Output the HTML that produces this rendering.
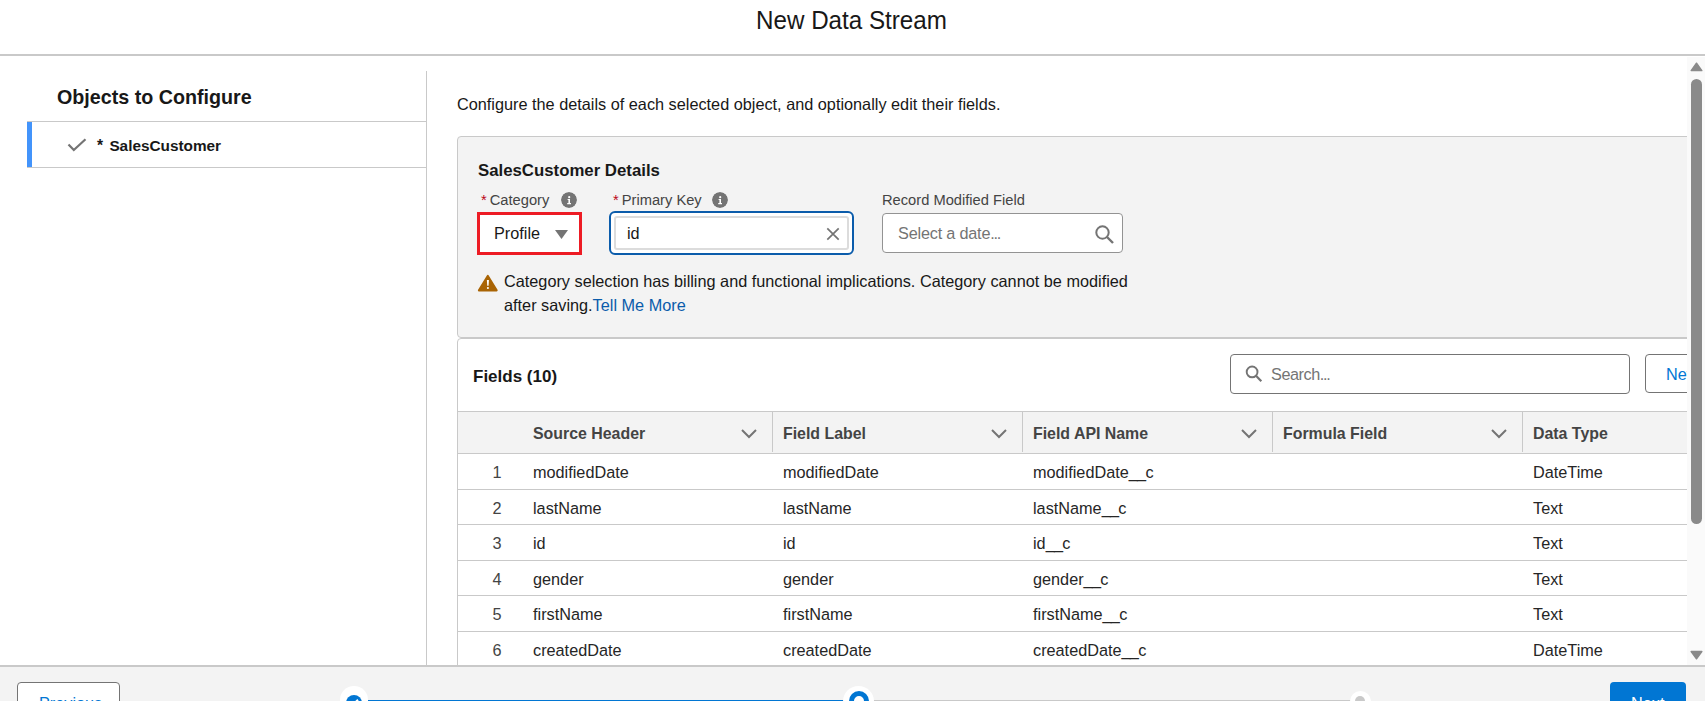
<!DOCTYPE html>
<html>
<head>
<meta charset="utf-8">
<style>
*{box-sizing:border-box;margin:0;padding:0}
html,body{width:1705px;height:701px;overflow:hidden;background:#fff}
body{position:relative;font-family:"Liberation Sans",sans-serif;color:#181818}
.a{position:absolute;white-space:nowrap;line-height:1}
.hdr{position:absolute;left:0;top:0;width:1705px;height:56px;border-bottom:2px solid #c9c9c9;background:#fff}
.title{left:-1px;width:1705px;text-align:center;top:8.5px;font-size:24.2px;color:#181818;transform:scaleY(1.08);transform-origin:50% 85%}
.sep{position:absolute;left:426px;top:71px;width:1px;height:594px;background:#c9c9c9}
.oh{left:57px;top:87.5px;font-size:19.7px;font-weight:bold}
.item{position:absolute;left:27px;top:121px;width:400px;height:47px;border-top:1px solid #c9c9c9;border-bottom:1px solid #c9c9c9}
.item .bar{position:absolute;left:0;top:0;width:5px;height:45px;background:#4394fb}
.sc{left:97px;top:137.6px;font-size:15.6px;font-weight:bold}
.intro{left:457px;top:96.3px;font-size:16.28px}
.details{position:absolute;left:457px;top:136px;width:1300px;height:202px;background:#f3f3f3;border:1px solid #c9c9c9;border-radius:4px}
.dh{left:478px;top:163px;font-size:16.8px;font-weight:bold}
.lbl{top:192.5px;font-size:14.7px;color:#444}
.req{color:#ba0517}
.info{position:absolute;width:16px;height:16px;border-radius:50%;background:#747474}
.box{position:absolute;background:#fff;border:1px solid #939393;border-radius:4px}
.val{font-size:16.25px;top:225.3px}
.warn{left:504px;font-size:16.28px;color:#181818}
.link{color:#0b5cab}
.fields{position:absolute;left:457px;top:338px;width:1300px;height:400px;background:#fff;border:1px solid #c9c9c9;border-radius:4px}
.fh{left:473px;top:368px;font-size:17px;font-weight:bold}
.th{position:absolute;left:458px;top:411px;width:1240px;height:43px;background:#f3f3f3;border-top:1px solid #c9c9c9;border-bottom:1px solid #c9c9c9}
.thx{top:426px;font-size:15.9px;font-weight:bold;color:#444}
.csep{position:absolute;top:412px;width:1px;height:40px;background:#c9c9c9}
.rowline{position:absolute;left:458px;width:1240px;height:1px;background:#c9c9c9}
.cell{font-size:16.25px;color:#262626}
.num{font-size:16.25px;color:#444}
.scroll{position:absolute;left:1687px;top:57px;width:18px;height:608px;background:#fafafa}
.footer{position:absolute;left:0;top:665px;width:1705px;height:36px;background:#f3f3f3;border-top:2px solid #c9c9c9}
</style>
</head>
<body>
<div class="hdr"></div>
<div class="a title">New Data Stream</div>

<div class="sep"></div>
<div class="a oh">Objects to Configure</div>
<div class="item"><div class="bar"></div></div>
<svg style="position:absolute;left:67px;top:138px" width="20" height="14" viewBox="0 0 20 14"><path d="M1.5 6.5 L6.8 12 L18.5 1.2" fill="none" stroke="#747474" stroke-width="2.2"/></svg>
<div class="a sc">*<span style="margin-left:6.3px;font-size:15.35px">SalesCustomer</span></div>

<div class="a intro">Configure the details of each selected object, and optionally edit their fields.</div>

<div class="details"></div>
<div class="a dh">SalesCustomer Details</div>
<div class="a lbl" style="left:481px"><span class="req" style="margin-right:3px">*</span>Category</div>
<svg class="info" style="left:561px;top:192px;background:none" width="16" height="16" viewBox="0 0 16 16"><circle cx="8" cy="8" r="8" fill="#747474"/><circle cx="8.2" cy="5.2" r="1.1" fill="#fff"/><path d="M6.6 6.9 H9 V11 H10 V12.2 H6.2 V11 H7.4 V8 H6.6 Z" fill="#fff"/></svg>
<div class="a lbl" style="left:613px"><span class="req" style="margin-right:3px">*</span>Primary Key</div>
<svg class="info" style="left:712px;top:192px;background:none" width="16" height="16" viewBox="0 0 16 16"><circle cx="8" cy="8" r="8" fill="#747474"/><circle cx="8.2" cy="5.2" r="1.1" fill="#fff"/><path d="M6.6 6.9 H9 V11 H10 V12.2 H6.2 V11 H7.4 V8 H6.6 Z" fill="#fff"/></svg>
<div class="a lbl" style="left:882px">Record Modified Field</div>

<div class="box" style="left:477px;top:212px;width:105px;height:43px;border:3px solid #ed1b24;border-radius:0"></div>
<div class="a val" style="left:494px">Profile</div>
<svg style="position:absolute;left:555px;top:230px" width="14" height="9"><path d="M0 0 L13 0 L6.5 9 Z" fill="#747474"/></svg>

<div class="box" style="left:609px;top:211px;width:245px;height:44px;border:2.7px solid #0b5cab;border-radius:6px"></div>
<div class="box" style="left:614px;top:216px;width:235px;height:34px;border:2px solid #dcdcdc;border-radius:3px"></div>
<div class="a val" style="left:627px">id</div>
<svg style="position:absolute;left:826px;top:227px" width="14" height="14"><path d="M1.3 1.3 L12.7 12.7 M12.7 1.3 L1.3 12.7" stroke="#747474" stroke-width="1.7"/></svg>

<div class="box" style="left:882px;top:213px;width:241px;height:40px;border-color:#939393"></div>
<div class="a val" style="left:898px;color:#747474;letter-spacing:-0.2px">Select a date<span style="letter-spacing:-1.3px">...</span></div>
<svg style="position:absolute;left:1094px;top:224px" width="22" height="22"><circle cx="8.5" cy="8.5" r="6.2" fill="none" stroke="#747474" stroke-width="2"/><path d="M13 13 L19 19" stroke="#747474" stroke-width="2.4"/></svg>

<svg style="position:absolute;left:477px;top:274px" width="22" height="19" viewBox="0 0 22 19"><path d="M10.8 2 L19.6 16.4 L2 16.4 Z" fill="#a96404" stroke="#a96404" stroke-width="2.2" stroke-linejoin="round"/><path d="M9.9 6 H11.9 L11.6 11.8 H10.2 Z" fill="#fff"/><circle cx="10.9" cy="14" r="1.05" fill="#fff"/></svg>
<div class="a warn" style="top:273.3px">Category selection has billing and functional implications. Category cannot be modified</div>
<div class="a warn" style="top:297px">after saving.<span class="link">Tell Me More</span></div>

<div class="fields"></div>
<div class="a fh">Fields (10)</div>
<div class="box" style="left:1230px;top:354px;width:400px;height:40px;border-color:#747474"></div>
<svg style="position:absolute;left:1244px;top:364px" width="20" height="20"><circle cx="8.1" cy="7.9" r="5.4" fill="none" stroke="#747474" stroke-width="1.9"/><path d="M12 11.8 L17.3 17.2" stroke="#747474" stroke-width="2.2"/></svg>
<div class="a" style="left:1271px;top:366.2px;font-size:16.25px;color:#747474;letter-spacing:-0.45px">Search<span style="letter-spacing:-1.3px">...</span></div>
<div class="box" style="left:1645px;top:354px;width:100px;height:39px;border-color:#747474"></div>
<div class="a" style="left:1666px;top:366.2px;font-size:16.25px;color:#0176d3">New</div>

<div class="th"></div>
<div class="a thx" style="left:533px">Source Header</div>
<div class="a thx" style="left:783px">Field Label</div>
<div class="a thx" style="left:1033px">Field API Name</div>
<div class="a thx" style="left:1283px">Formula Field</div>
<div class="a thx" style="left:1533px">Data Type</div>
<div class="csep" style="left:772px"></div>
<div class="csep" style="left:1022px"></div>
<div class="csep" style="left:1272px"></div>
<div class="csep" style="left:1522px"></div>
<svg style="position:absolute;left:741px;top:429px" width="16" height="10"><path d="M1 1 L8 8 L15 1" fill="none" stroke="#747474" stroke-width="2"/></svg>
<svg style="position:absolute;left:991px;top:429px" width="16" height="10"><path d="M1 1 L8 8 L15 1" fill="none" stroke="#747474" stroke-width="2"/></svg>
<svg style="position:absolute;left:1241px;top:429px" width="16" height="10"><path d="M1 1 L8 8 L15 1" fill="none" stroke="#747474" stroke-width="2"/></svg>
<svg style="position:absolute;left:1491px;top:429px" width="16" height="10"><path d="M1 1 L8 8 L15 1" fill="none" stroke="#747474" stroke-width="2"/></svg>

<!--ROWS-->
<div class="a num" style="left:492.5px;top:463.9px">1</div>
<div class="a cell" style="left:533px;top:463.9px">modifiedDate</div>
<div class="a cell" style="left:783px;top:463.9px">modifiedDate</div>
<div class="a cell" style="left:1033px;top:463.9px">modifiedDate<span style="letter-spacing:-0.7px">__</span>c</div>
<div class="a cell" style="left:1533px;top:463.9px">DateTime</div>
<div class="a num" style="left:492.5px;top:500.1px">2</div>
<div class="a cell" style="left:533px;top:500.1px">lastName</div>
<div class="a cell" style="left:783px;top:500.1px">lastName</div>
<div class="a cell" style="left:1033px;top:500.1px">lastName<span style="letter-spacing:-0.7px">__</span>c</div>
<div class="a cell" style="left:1533px;top:500.1px">Text</div>
<div class="a num" style="left:492.5px;top:535.4px">3</div>
<div class="a cell" style="left:533px;top:535.4px">id</div>
<div class="a cell" style="left:783px;top:535.4px">id</div>
<div class="a cell" style="left:1033px;top:535.4px">id<span style="letter-spacing:-0.7px">__</span>c</div>
<div class="a cell" style="left:1533px;top:535.4px">Text</div>
<div class="a num" style="left:492.5px;top:570.8px">4</div>
<div class="a cell" style="left:533px;top:570.8px">gender</div>
<div class="a cell" style="left:783px;top:570.8px">gender</div>
<div class="a cell" style="left:1033px;top:570.8px">gender<span style="letter-spacing:-0.7px">__</span>c</div>
<div class="a cell" style="left:1533px;top:570.8px">Text</div>
<div class="a num" style="left:492.5px;top:606.2px">5</div>
<div class="a cell" style="left:533px;top:606.2px">firstName</div>
<div class="a cell" style="left:783px;top:606.2px">firstName</div>
<div class="a cell" style="left:1033px;top:606.2px">firstName<span style="letter-spacing:-0.7px">__</span>c</div>
<div class="a cell" style="left:1533px;top:606.2px">Text</div>
<div class="a num" style="left:492.5px;top:642.3px">6</div>
<div class="a cell" style="left:533px;top:642.3px">createdDate</div>
<div class="a cell" style="left:783px;top:642.3px">createdDate</div>
<div class="a cell" style="left:1033px;top:642.3px">createdDate<span style="letter-spacing:-0.7px">__</span>c</div>
<div class="a cell" style="left:1533px;top:642.3px">DateTime</div>
<div class="rowline" style="top:489px"></div>
<div class="rowline" style="top:524px"></div>
<div class="rowline" style="top:560px"></div>
<div class="rowline" style="top:595px"></div>
<div class="rowline" style="top:631px"></div>
<!--/ROWS-->

<div class="scroll"></div>
<svg style="position:absolute;left:1689px;top:61px" width="15" height="12"><path d="M7.5 2.2 L12.8 9.6 L2.2 9.6 Z" fill="#8a8a8a" stroke="#8a8a8a" stroke-width="1.5" stroke-linejoin="round"/></svg>
<div style="position:absolute;left:1691px;top:79px;width:11px;height:445px;border-radius:6px;background:#8a8a8a"></div>
<svg style="position:absolute;left:1689px;top:650px" width="15" height="11"><path d="M2.2 1.6 L12.8 1.6 L7.5 8.8 Z" fill="#8a8a8a" stroke="#8a8a8a" stroke-width="1.5" stroke-linejoin="round"/></svg>

<div class="footer"></div>
<div class="box" style="left:17px;top:682px;width:103px;height:40px;border-color:#747474"></div>
<div class="a" style="left:39px;top:694.5px;font-size:16.25px;color:#0176d3">Previous</div>
<div style="position:absolute;left:353px;top:700px;width:505px;height:4px;background:#0176d3"></div>
<div style="position:absolute;left:858px;top:700px;width:502px;height:4px;background:#c9c9c9"></div>
<div style="position:absolute;left:339.7px;top:686px;width:28px;height:28px;border-radius:50%;background:#fff"></div>
<div style="position:absolute;left:345.5px;top:695px;width:16px;height:16px;border-radius:50%;background:#0176d3"></div>
<div style="position:absolute;left:843.3px;top:685.5px;width:31px;height:31px;border-radius:50%;background:#fff"></div>
<div style="position:absolute;left:848.5px;top:691px;width:20px;height:20px;border-radius:50%;border:5px solid #0176d3;background:#fff"></div>
<div style="position:absolute;left:1349.5px;top:690.6px;width:21px;height:21px;border-radius:50%;background:#fff"></div>
<div style="position:absolute;left:1355px;top:696px;width:10px;height:10px;border-radius:50%;background:#c9c9c9"></div>
<svg style="position:absolute;left:340px;top:690px" width="30" height="16"><path d="M9.5 12.5 L12.5 15 L18 9.8" fill="none" stroke="#fff" stroke-width="2"/></svg>
<div style="position:absolute;left:1610px;top:682px;width:76px;height:40px;border-radius:4px;background:#0176d3"></div>
<div class="a" style="left:1631px;top:694.5px;font-size:16.25px;color:#fff">Next</div>

</body>
</html>
